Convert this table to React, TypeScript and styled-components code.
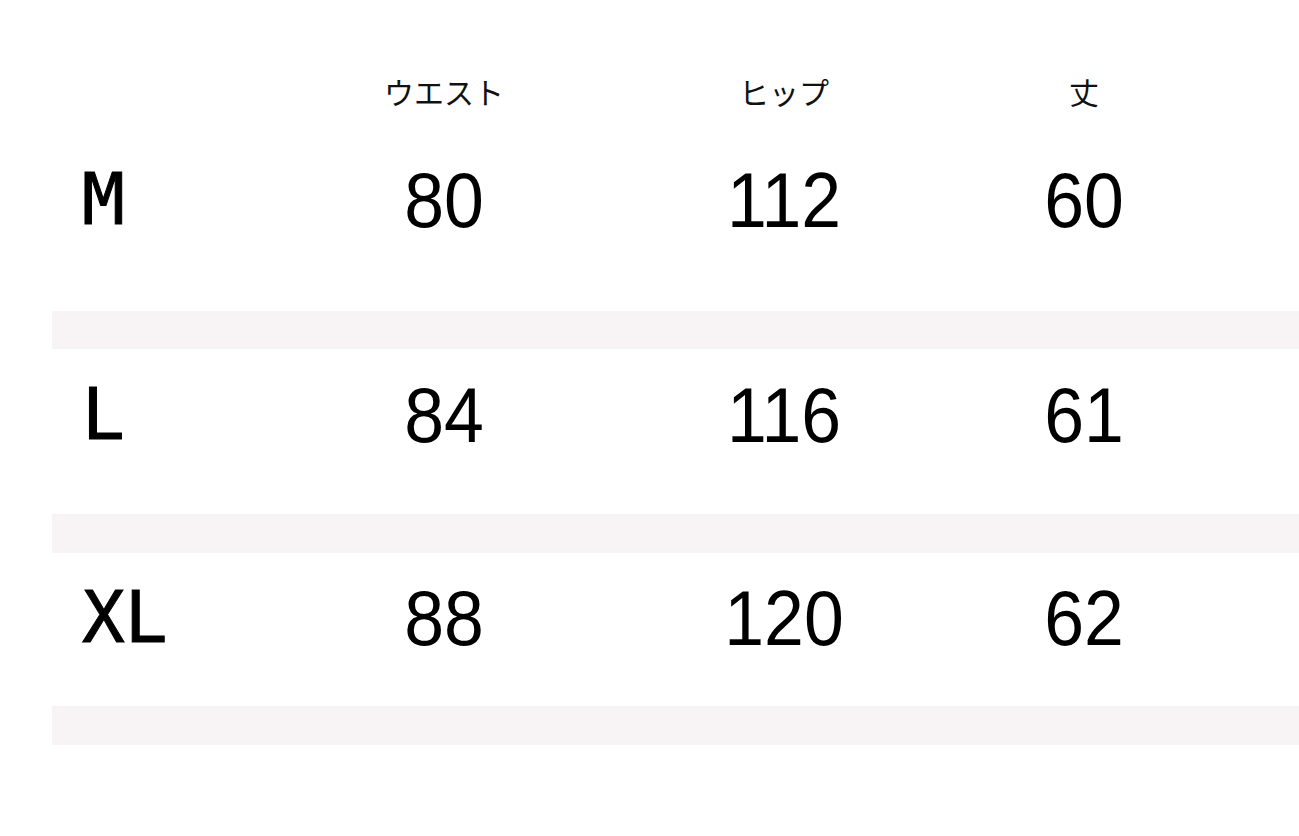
import React from "react";
import styled, { createGlobalStyle } from "styled-components";

const sizes = [
  { name: "M", waist: 80, hip: 112, length: 60, top: 21, height: 171, band: 38 },
  { name: "L", waist: 84, hip: 116, length: 61, top: 27, height: 165, band: 39 },
  { name: "XL", waist: 88, hip: 120, length: 62, top: 26, height: 153, band: 39 },
];

const GlobalStyle = createGlobalStyle`
  html, body {
    margin: 0;
    padding: 0;
    background: #fff;
  }
`;

const App = (): JSX.Element => {
  return (
    <>
      <GlobalStyle />
      <Chart>
        <HeaderRow>
          <span />
          <HeadCell>ウエスト</HeadCell>
          <HeadCell>ヒップ</HeadCell>
          <HeadCell>丈</HeadCell>
        </HeaderRow>
        {sizes.map((s) => (
          <React.Fragment key={s.name}>
            <SizeRow $top={s.top} $height={s.height}>
              <SizeName>{s.name}</SizeName>
              <Value>{s.waist}</Value>
              <Value>{s.hip}</Value>
              <Value>{s.length}</Value>
            </SizeRow>
            <Band $height={s.band} />
          </React.Fragment>
        ))}
      </Chart>
    </>
  );
};

const Chart = styled.div`
  width: 1299px;
  height: 836px;
  background: #fff;
  overflow: hidden;
`;

const Columns = styled.div`
  display: grid;
  grid-template-columns: 274px 340px 340px 260px;
  align-items: start;
`;

const HeaderRow = styled(Columns)`
  height: 140px;
  padding-top: 73px;
  box-sizing: border-box;
`;

const HeadCell = styled.div`
  text-align: center;
  font-family: "Noto Sans CJK JP", "Noto Sans", sans-serif;
  font-size: 30px;
  line-height: 36px;
  color: #111;
`;

const SizeRow = styled(Columns)<{ $top: number; $height: number }>`
  height: ${(p) => p.$height}px;
  padding-top: ${(p) => p.$top}px;
  box-sizing: border-box;
`;

const SizeName = styled.div`
  padding-left: 82px;
  font-family: "DejaVu Sans Mono", "Liberation Mono", monospace;
  font-size: 71px;
  line-height: 78px;
  color: #000;
  -webkit-text-stroke: 1px #000;
`;

const Value = styled.div`
  text-align: center;
  font-family: "Liberation Sans", Arial, sans-serif;
  font-size: 77px;
  line-height: 78px;
  color: #000;
  transform: scaleX(0.93);
`;

const Band = styled.div<{ $height: number }>`
  margin-left: 52px;
  height: ${(p) => p.$height}px;
  background: #f8f3f4;
`;

export default App;
